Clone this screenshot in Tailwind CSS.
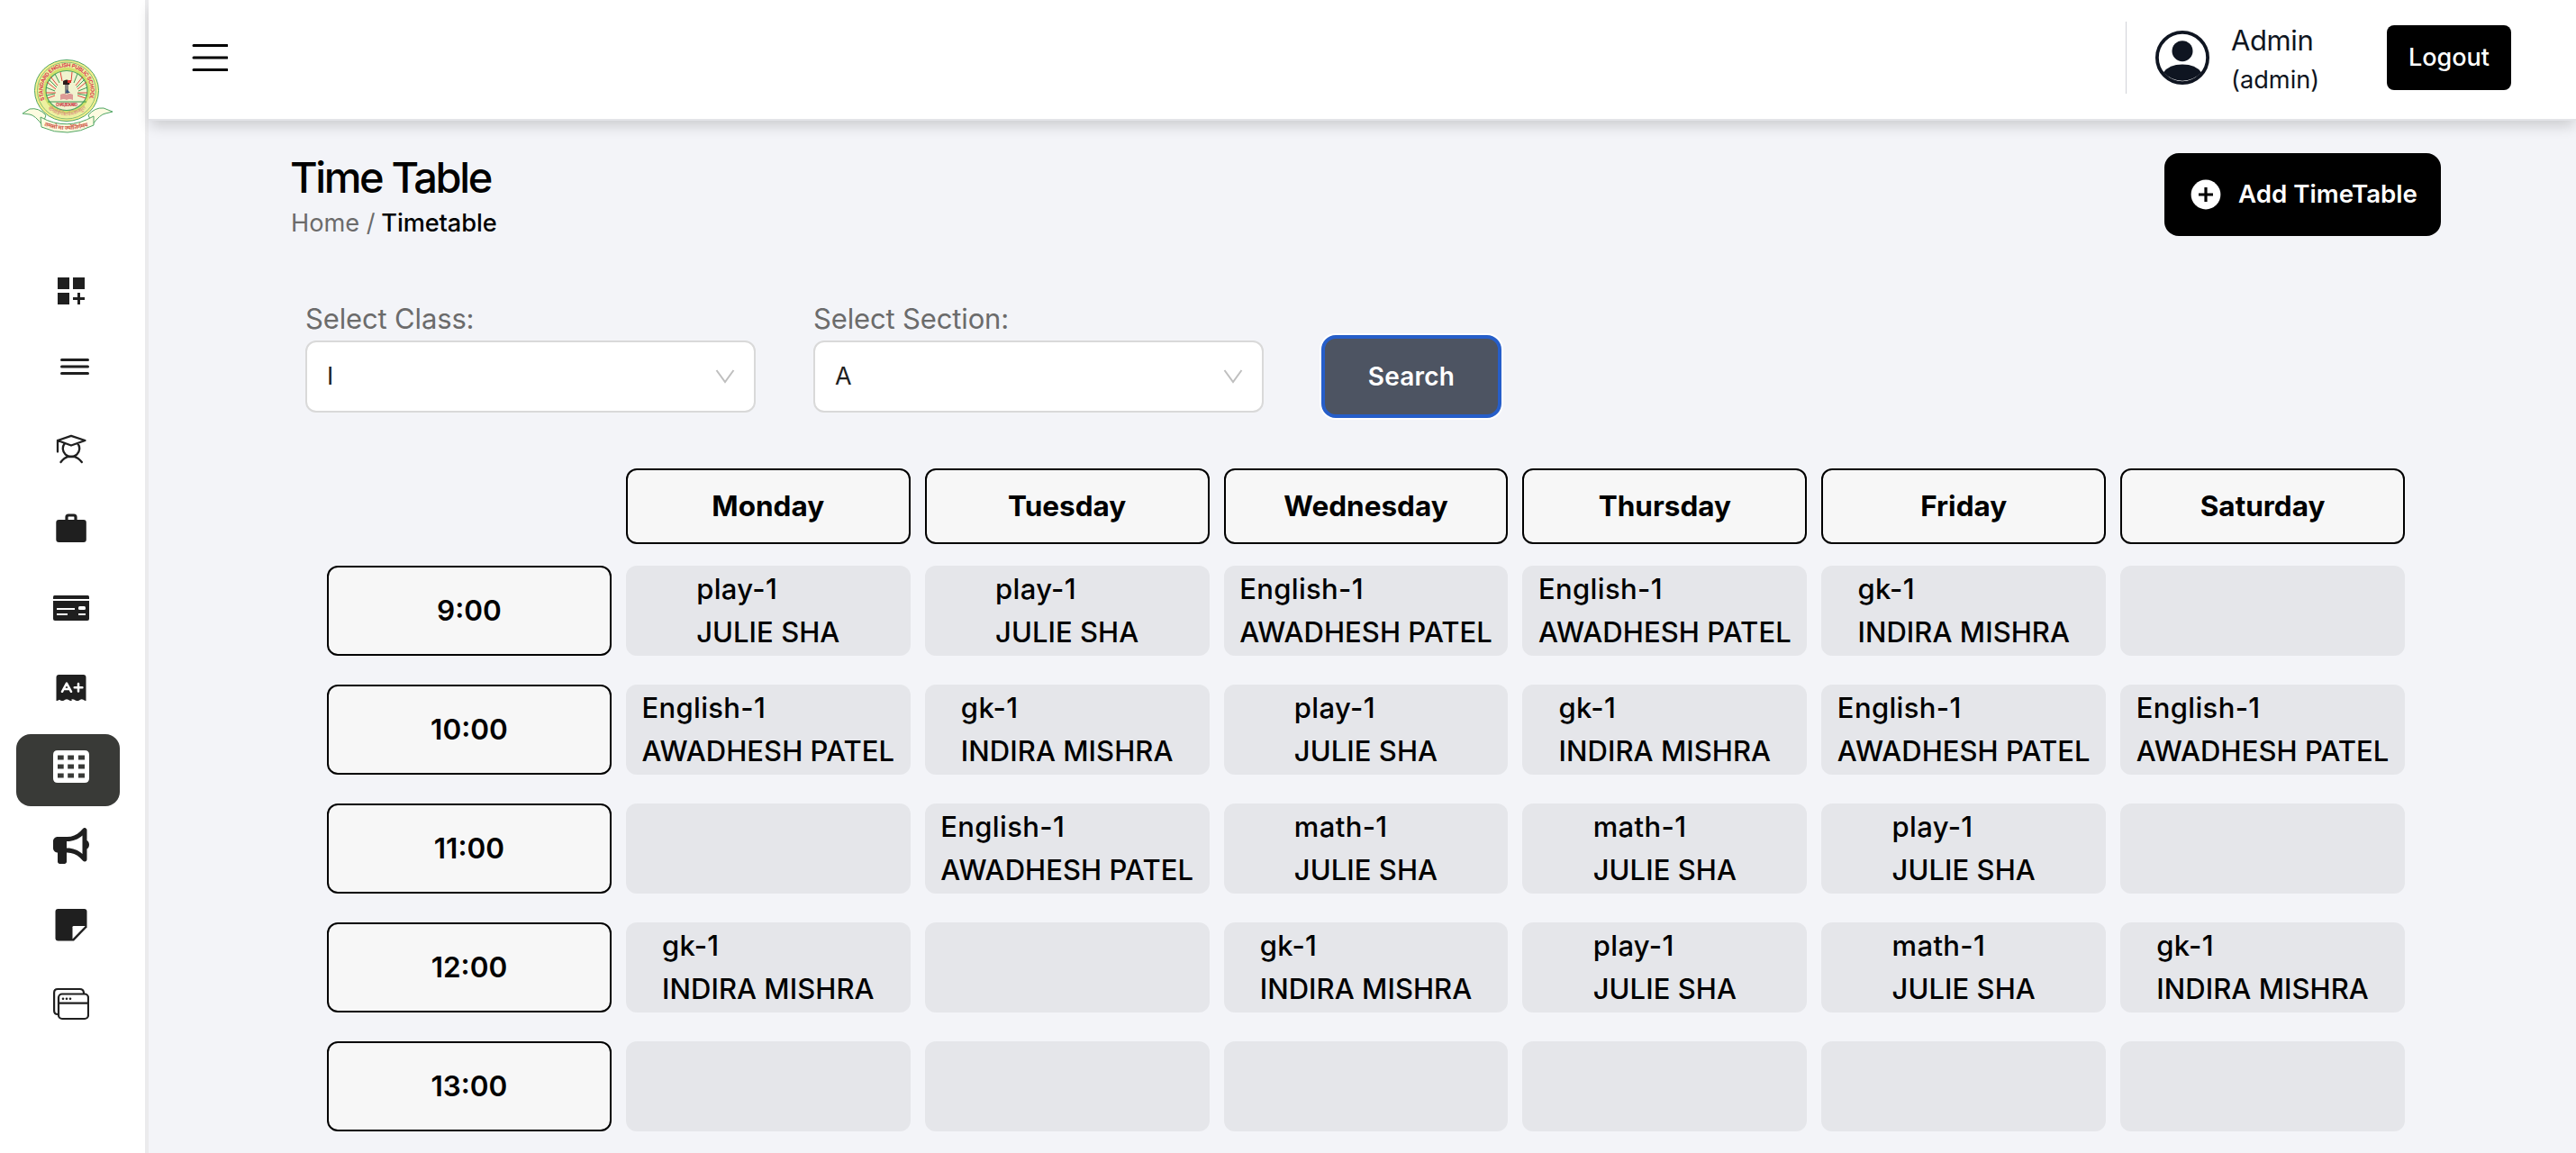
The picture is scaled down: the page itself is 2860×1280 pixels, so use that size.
<!DOCTYPE html>
<html lang="en">
<head>
<meta charset="utf-8">
<title>Time Table</title>
<script src="https://cdn.jsdelivr.net/npm/@tailwindcss/browser@4"></script>
</head>
<body class="flex h-[1280px] w-[2860px] overflow-hidden bg-[#f3f4f8] font-['Inter','Noto_Sans',sans-serif] text-black">

<aside class="flex w-[165px] shrink-0 flex-col border-r-4 border-[#ebebed] bg-white text-[#1f1f1f]">
  <svg class="mt-[66px] ml-[25px] h-[82px] w-[100px]" viewBox="0 0 100 82">
    <g stroke="#4fa564" stroke-width="1" fill="#fdfbe0">
      <path d="M0 60 L8 55 Q18 53 26 62 L22 73 Q14 62 8 61 Z"/>
      <path d="M100 58 L90 54 Q80 53 73 62 L78 72 Q86 61 92 60 Z"/>
    </g>
    <ellipse cx="49" cy="34.5" rx="35.5" ry="34" fill="#f6ef8e" stroke="#4fa564"/>
    <ellipse cx="49" cy="34.5" rx="32.5" ry="31.5" fill="#eef0a0" stroke="#6fb46a" stroke-width=".8"/>
    <ellipse cx="49" cy="34.5" rx="26" ry="25.5" fill="#cfe06a"/>
    <ellipse cx="49" cy="34.5" rx="23" ry="22" fill="#f1f3cf" stroke="#4fa564" stroke-width="1.2"/>
    <g stroke-width="1">
      <path stroke="#e0483e" d="M44 24 42 14M54 24 55 14M39 29 31 19M59 29 67 19M37 33 27 25M61 33 71 25M36 40 28 43M61 40 70 43M37 37 26 37M61 37 72 37"/>
      <path stroke="#3f9a55" d="M41 26 36 16M57 26 61 16M38 31 29 22M60 31 69 22M36 35 26 31M62 35 72 31M36 38 26 40M61 38 72 40M28 47H71"/>
    </g>
    <path d="M42 39 Q46 37 49 39 Q52 37 56 39 V45 Q52 43 49 45 Q46 43 42 45Z" fill="#dd9a96"/>
    <path d="M45 24 Q49 21 53 24 L52 28 H45Z" fill="#2b1a1a"/><path d="M50 23h4v3h-4z" fill="#d8322b"/>
    <path d="M47 28h4v10h-4z" fill="#8d8a84"/><path d="M49 33l4 4h-5z" fill="#35507c"/>
    <path id="arcTop" d="M24.5 45 A26.5 26.5 0 1 1 73.5 45" fill="none"/>
    <text class="font-['Inter',sans-serif] font-bold" font-size="6" fill="#d8404e"><textPath href="#arcTop" textLength="102">STANDARD ENGLISH PUBLIC SCHOOL</textPath></text>
    <text class="font-['Inter',sans-serif] font-bold" x="49" y="52" font-size="4.2" text-anchor="middle" textLength="24" fill="#c9303c">CHAS, BOKARO</text>
    <path id="arcLow" d="M26 53 Q49 72 72 53" fill="none"/>
    <text class="font-['Noto_Sans',sans-serif]" font-size="6" fill="#d98a7c"><textPath href="#arcLow" startOffset="2" textLength="46">स्टैण्डर्ड इंग्लिश पब्लिक स्कूल</textPath></text>
    <path d="M20 64 Q49 80 79 63 L79 73 Q50 88 21 75 Z" fill="#fdfbe0" stroke="#4fa564"/>
    <path id="arcBanner" d="M24 73.500 Q50 83 77 72.500" fill="none"/>
    <text class="font-['Noto_Sans',sans-serif] font-bold" font-size="6.5" fill="#cf5a4a"><textPath href="#arcBanner" textLength="50">तमसो मा ज्योतिर्गमय</textPath></text>
  </svg>

  <nav class="mt-[139px] flex w-[115px] flex-col gap-2 ml-[18px]">
    <a class="flex h-20 items-center pb-2 pl-[41px]"><svg class="size-10" viewBox="0 0 40 40" fill="currentColor"><path d="M5 5h13v13H5zM22 5h13v13H22zM5 22h13v13H5zM27 22h3v5h5v3h-5v5h-3v-5h-5v-3h5z"/></svg></a>
    <a class="flex h-20 items-center pb-2 pl-[41px]"><svg class="size-10" viewBox="0 0 40 40" stroke="currentColor" stroke-width="3" stroke-linecap="round"><path d="M9.500 8.500h29M9.500 16h29M9.500 23.500h29"/></svg></a>
    <a class="flex h-20 items-center pb-2 pl-[41px]"><svg class="size-10" viewBox="0 0 40 40" fill="none" stroke="currentColor" stroke-width="2.300" stroke-linecap="round" stroke-linejoin="round"><path d="M5 22.500V10L20 4.800 35.500 10 20 15.500 5 10M12.800 13.200A9.200 9.200 0 1 0 27.200 13.200M8.500 34Q13 27.700 20 27.700T31.800 34"/></svg></a>
    <a class="flex h-20 items-center pb-2 pl-[41px]"><svg class="size-10" viewBox="0 0 40 40"><rect x="3.300" y="10" width="33.500" height="25" rx="3" fill="currentColor"/><path d="M15 11V7q0-2 2-2h6q2 0 2 2v4" fill="none" stroke="currentColor" stroke-width="3.200"/></svg></a>
    <a class="flex h-20 items-center pb-2 pl-[41px]"><svg class="size-10" viewBox="0 0 40 40" fill="currentColor"><path d="M0 10V7.500Q0 6 1.500 6h37Q40 6 40 7.500V10z"/><path d="M0 12h40v20q0 2-2 2H2q-2 0-2-2z"/><path fill="#fff" d="M4 20h20v2H4zM4 26h12v2H4zM28 26h8v2h-8z"/><rect x="28" y="18" width="8" height="4" rx="1.500" fill="#fff"/></svg></a>
    <a class="flex h-20 items-center pb-2 pl-[41px]"><svg class="size-10" viewBox="0 0 40 40"><path fill="currentColor" d="M3.500 35V9q0-3 3-3h27q3 0 3 3v26q-1.500 0-3-1.200-1.800-1.300-3.500 0-1.700 1.500-3.300 1.200-1.700 0-3.200-1.200-1.800-1.300-3.500 0Q21.500 35 20 35t-3.200-1.200q-1.800-1.300-3.500 0Q11.800 35 10.200 35q-1.700 0-3.200-1.300Q5 35 3.500 35z"/><path d="M10 24.800 15 15.500 20 24.800M12 22h6.500M28 16v8.500M23.700 20.200h8.700" fill="none" stroke="#fff" stroke-width="2.500" stroke-linecap="round" stroke-linejoin="round"/></svg></a>
    <a class="flex h-20 items-center rounded-2xl bg-[#393a37] pb-2 pl-[41px] text-white"><svg class="size-10" viewBox="0 0 40 40"><path fill="currentColor" fill-rule="evenodd" d="M5 2h30q5 0 5 5v26q0 5-5 5H5q-5 0-5-5V7q0-5 5-5zM5 7.500v5h6.700v-5zM16.200 7.500v5H23v-5zM28 7.500v5h7v-5zM5 17.500v5h6.700v-5zM16.200 17.500v5H23v-5zM28 17.500v5h7v-5zM5 27.500v5h6.700v-5zM16.200 27.500v5H23v-5zM28 27.500v5h7v-5z"/></svg></a>
    <a class="flex h-20 items-center pb-2 pl-[41px]"><svg class="size-10" viewBox="0 0 512 512" fill="currentColor"><path d="M480 32c0-12.900-7.800-24.600-19.800-29.600s-25.700-2.200-34.900 6.900L381.700 53c-48 48-113.100 75-181 75H64c-35.300 0-64 28.700-64 64v96c0 35.300 28.700 64 64 64v128c0 17.700 14.300 32 32 32h64c17.700 0 32-14.300 32-32V352h8.700c67.900 0 133 27 181 75l43.600 43.600c9.200 9.200 22.900 11.900 34.900 6.900s19.800-16.600 19.800-29.600V300.400c18.600-8.800 32-32.500 32-60.400s-13.400-51.600-32-60.400V32zm-64 76.700v262.600C357.200 317.800 280.500 288 200.700 288H192V192h8.700c79.800 0 156.500-29.800 215.300-83.300z"/></svg></a>
    <a class="flex h-20 items-center pb-2 pl-[41px]"><svg class="size-10" viewBox="0 0 40 40"><path fill="currentColor" d="M5.500 2h29q3 0 3 3v17.500L23 37.500H5.500q-3 0-3-3V5q0-3 3-3z"/><path fill="#fff" d="M22.800 21H35.700L21.500 35.500V22.300q0-1.300 1.300-1.300z"/></svg></a>
    <a class="flex h-20 items-center pb-2 pl-[41px]"><svg class="size-10" viewBox="0 0 40 40" fill="none" stroke="currentColor" stroke-width="2.200"><rect x="6" y="8.500" width="33" height="27.500" rx="4"/><path d="M6 18.700h33M6 31H5q-3.900 0-3.900-4V7q0-4 4-4h24.500q4 0 4.400 4v1.500"/><g fill="currentColor" stroke="none"><circle cx="11" cy="13.700" r="1.300"/><circle cx="15" cy="13.700" r="1.300"/><circle cx="19" cy="13.700" r="1.300"/></g></svg></a>
  </nav>
</aside>

<div class="flex flex-1 flex-col">
  <header class="z-10 flex h-[134px] shrink-0 items-start border-b-2 border-[#e3e4e8] bg-white pl-12 text-[#0f1521] shadow-[0_8px_14px_-2px_rgba(0,0,0,0.16)]">
    <svg class="mt-11 h-10 w-10 text-black" viewBox="0 0 40 40" stroke="currentColor" stroke-width="3" stroke-linecap="round"><path d="M2 6.500h37M2 20h37M2 33.500h37"/></svg>
    <div class="mt-6 ml-auto h-20 w-px bg-[#d1d3d8]"></div>
    <svg class="mt-[34px] ml-8 size-[60px]" viewBox="0 0 60 60"><circle cx="30" cy="30" r="28.100" fill="none" stroke="currentColor" stroke-width="3.800"/><circle cx="30" cy="22.700" r="11.500" fill="currentColor"/><path fill="currentColor" d="M9 46.500Q15 37.500 30 37.500T51 46.500A28.500 28.500 0 0 1 9 46.500z"/></svg>
    <div class="mt-[21px] ml-6 w-[173px]">
      <div class="text-[31px] leading-[48px] tracking-[-0.400px]">Admin</div>
      <div class="text-[27.200px] leading-10">(admin)</div>
    </div>
    <button class="mt-7 mr-[72px] h-[72px] w-[138px] rounded-lg bg-black pt-px text-[27px] font-medium text-white">Logout</button>
  </header>

  <main class="flex flex-col pt-9 pr-[150px] pl-[158px]">
    <div class="flex h-[92px] justify-between">
      <div class="pt-[3px]">
        <h1 class="-ml-px text-[47px] leading-[48px] font-medium tracking-[-2.400px]">Time Table</h1>
        <p class="mt-[7px] text-[27.200px] leading-10 text-[#6b6b6b]">Home / <span class="-ml-px font-medium tracking-[-0.100px] text-black">Timetable</span></p>
      </div>
      <button class="flex h-[92px] w-[307px] items-center rounded-2xl bg-black pl-[29px] text-[27.700px] font-semibold text-white">
        <svg class="mr-[19px] size-[34px]" viewBox="0 0 34 34"><circle cx="17" cy="17" r="16.400" fill="#fff"/><path d="M17 9v16M9 17h16" stroke="#000" stroke-width="3.200"/></svg>Add TimeTable
      </button>
    </div>

    <div class="mt-[68px] flex items-start gap-16 pl-4">
      <div class="w-[500px]">
        <label class="block h-12 text-[31px] leading-[48px] tracking-[-0.150px] text-[#6b6b6b]">Select Class:</label>
        <div class="flex h-20 items-center justify-between rounded-xl border-2 border-[#d9d9d9] bg-white pr-[21px] pl-[22px] text-[27px] text-[#1f1f1f]">I
          <svg class="h-4 w-[22px]" viewBox="0 0 22 16" fill="none" stroke="#bfbfbf" stroke-width="2"><path d="M1.500 1 11 14 20.500 1"/></svg>
        </div>
      </div>
      <div class="w-[500px]">
        <label class="block h-12 text-[31px] leading-[48px] tracking-[-0.150px] text-[#6b6b6b]">Select Section:</label>
        <div class="flex h-20 items-center justify-between rounded-xl border-2 border-[#d9d9d9] bg-white pr-[21px] pl-[22px] text-[27px] text-[#1f1f1f]">A
          <svg class="h-4 w-[22px]" viewBox="0 0 22 16" fill="none" stroke="#bfbfbf" stroke-width="2"><path d="M1.500 1 11 14 20.500 1"/></svg>
        </div>
      </div>
      <button class="mt-[42px] h-[92px] w-[200px] rounded-2xl border-4 border-[#265ec9] bg-[#4d5462] text-[28px] font-semibold tracking-[0.200px] text-white ring-2 ring-white">Search</button>
    </div>

    <div id="timetable" class="mt-14 ml-10 grid w-[2307px] grid-cols-7 gap-x-4"></div>
  </main>
</div>

<script>
const days = ['Monday', 'Tuesday', 'Wednesday', 'Thursday', 'Friday', 'Saturday'];
const P = ['play-1', 'JULIE SHA'], M = ['math-1', 'JULIE SHA'], E = ['English-1', 'AWADHESH PATEL'], G = ['gk-1', 'INDIRA MISHRA'];
const slots = [
  ['9:00', [P, P, E, E, G, null]],
  ['10:00', [E, G, P, G, E, E]],
  ['11:00', [null, E, M, M, P, null]],
  ['12:00', [G, null, G, P, M, G]],
  ['13:00', [null, null, null, null, null, null]]
];
let html = '<div></div>';
for (const d of days) html += `<div class="mb-6 flex h-[84px] items-center justify-center rounded-xl border-2 border-black bg-[#f7f7f7] text-[31.500px] font-bold">${d}</div>`;
for (const [time, cells] of slots) {
  html += `<div class="mb-8 flex h-[100px] items-center justify-center rounded-xl border-2 border-black bg-[#f7f7f7] text-[31.500px] font-semibold">${time}</div>`;
  for (const c of cells) {
    html += '<div class="mb-8 flex h-[100px] justify-center rounded-xl bg-[#e5e6ea] pt-0.5 text-[31px] leading-[48px] font-medium whitespace-nowrap">' +
      (c ? `<div><div class="tracking-[0.350px]">${c[0]}</div><div class="tracking-[0.050px]">${c[1]}</div></div>` : '') + '</div>';
  }
}
document.getElementById('timetable').innerHTML = html;
</script>
</body>
</html>
